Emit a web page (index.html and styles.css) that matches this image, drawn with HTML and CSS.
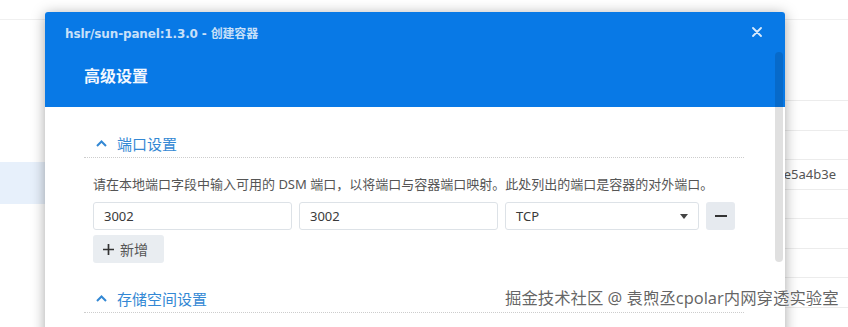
FILE: index.html
```html
<!DOCTYPE html>
<html lang="zh-CN">

<head>
    <meta charset="UTF-8" />
    <title>创建容器</title>
    <link rel="stylesheet" href="styles.css">
</head>

<body>

    <div class="topbar"></div>

    <div class="page">
        <aside class="sidebar">
            <div class="side-item active"></div>
        </aside>
        <main class="list">
            <div class="list-head"></div>
            <div class="row"></div>
            <div class="row"></div>
            <div class="row"><span class="cell-id">be5a4b3e</span></div>
            <div class="row"></div>
            <div class="row"></div>
            <div class="row"></div>
            <div class="row"></div>
        </main>
    </div>

    <div class="modal">
        <div class="modal-head">
            <div class="modal-title">
                <span>hslr/sun-panel:1.3.0 - <span class="title-cjk">创建容器</span></span>
                <button class="close" aria-label="关闭">
                    <svg width="10" height="10" viewBox="0 0 10 10">
                        <path d="M1 1 L9 9 M9 1 L1 9" stroke="currentColor" stroke-width="1.8" stroke-linecap="round" />
                    </svg>
                </button>
            </div>
            <h2 class="modal-subtitle">高级设置</h2>
        </div>

        <div class="modal-body">
            <section class="group">
                <div class="group-title">
                    <svg class="chevron" width="11" height="7" viewBox="0 0 11 7">
                        <path d="M1 6 L5.5 1.5 L10 6" fill="none" stroke="currentColor" stroke-width="2" />
                    </svg>
                    端口设置
                </div>
                <div class="group-body">
                    <p class="hint">请在本地端口字段中输入可用的 DSM 端口，以将端口与容器端口映射。此处列出的端口是容器的对外端口。</p>
                    <div class="port-row">
                        <input class="field" value="3002" />
                        <input class="field" value="3002" />
                        <div class="field select">
                            <span>TCP</span>
                            <svg width="8" height="5" viewBox="0 0 8 5">
                                <path d="M0 0 L8 0 L4 5 Z" fill="#444" />
                            </svg>
                        </div>
                        <button class="btn-remove" aria-label="删除">
                            <svg width="12" height="2" viewBox="0 0 12 2">
                                <rect width="12" height="2" fill="#333" />
                            </svg>
                        </button>
                    </div>
                    <button class="btn-add">
                        <svg width="11" height="11" viewBox="0 0 11 11">
                            <path d="M5.5 0 V11 M0 5.5 H11" stroke="#333" stroke-width="1.7" />
                        </svg>
                        新增
                    </button>
                </div>
            </section>

            <section class="group">
                <div class="group-title">
                    <svg class="chevron" width="11" height="7" viewBox="0 0 11 7">
                        <path d="M1 6 L5.5 1.5 L10 6" fill="none" stroke="currentColor" stroke-width="2" />
                    </svg>
                    存储空间设置
                </div>
            </section>
        </div>

        <div class="scroll-thumb"></div>
    </div>

    <div class="watermark">掘金技术社区 @ 袁煦丞cpolar内网穿透实验室</div>

</body>

</html>
```

FILE: styles.css
```css
* {
    box-sizing: border-box;
}

body {
    margin: 0;
    width: 848px;
    height: 327px;
    overflow: hidden;
    background: #fff;
    font-family: "Noto Sans", "Noto Sans CJK SC", sans-serif;
    color: #333;
    position: relative;
}

.topbar {
    height: 20px;
    border-bottom: 1px solid #f0f0f0;
}

.page {
    display: grid;
    grid-template-columns: 220px 1fr;
}

.sidebar {
    padding-top: 142px;
}

.side-item {
    height: 42px;
}

.side-item.active {
    background: #e7f0fb;
}

.list-head {
    height: 81px;
    border-bottom: 1px solid #ececec;
}

.row {
    display: grid;
    grid-template-columns: 616px 1fr;
    align-items: center;
    height: 29.5px;
    border-bottom: 1px solid #ececec;
}

.cell-id {
    text-align: right;
    font-size: 13px;
    color: #555;
}

.modal {
    position: absolute;
    left: 45px;
    top: 12px;
    width: 740px;
    height: 340px;
    background: #fff;
    border-radius: 3px 3px 0 0;
    box-shadow: 0 2px 14px rgba(0, 0, 0, 0.35);
    overflow: hidden;
}

.modal-head {
    background: #0879e6;
    padding: 0 23px 0 20px;
}

.modal-title {
    display: flex;
    align-items: center;
    justify-content: space-between;
    height: 40px;
    font-family: "DejaVu Sans", "Noto Sans CJK SC", sans-serif;
    font-size: 12px;
    font-weight: bold;
    letter-spacing: -0.15px;
    color: rgba(255, 255, 255, 0.78);
}

.title-cjk {
    font-family: "Noto Sans CJK SC", sans-serif;
    font-size: 12px;
}

.close {
    display: flex;
    padding: 0;
    border: none;
    background: none;
    color: rgba(255, 255, 255, 0.85);
}

.modal-subtitle {
    margin: 0;
    padding: 12px 0 19px 19px;
    font-size: 16px;
    line-height: 24px;
    font-weight: bold;
    color: #f2f7fe;
}

.modal-body {
    padding: 22px 41px 0 39px;
}

.group-title {
    display: flex;
    align-items: center;
    gap: 10px;
    height: 29px;
    padding-left: 12px;
    font-size: 15px;
    color: #3388d4;
    border-bottom: 1px dotted #cdcdcd;
}

.group + .group {
    margin-top: 21px;
}

.group-body {
    padding: 0 8px 0 9px;
}

.hint {
    margin: 16px 0 8px;
    font-size: 13px;
    line-height: 20px;
    color: #555;
}

.port-row {
    display: grid;
    grid-template-columns: 199px 199px 194px 29px;
    column-gap: 7px;
    height: 28px;
}

.field {
    height: 28px;
    padding: 0 10px;
    border: 1px solid #dde2e7;
    border-radius: 3px;
    font-family: inherit;
    font-size: 13px;
    color: #3a3a3a;
    background: #fff;
}

.select {
    display: flex;
    align-items: center;
    justify-content: space-between;
    padding-right: 10px;
}

.btn-remove {
    display: flex;
    align-items: center;
    justify-content: center;
    height: 28px;
    border: none;
    border-radius: 3px;
    background: #e6eaef;
    padding: 0;
}

.btn-add {
    display: flex;
    align-items: center;
    gap: 6px;
    margin-top: 5px;
    height: 28px;
    width: 71px;
    padding: 0 10px;
    border: none;
    border-radius: 3px;
    background: #e9edf1;
    font-family: inherit;
    font-size: 14px;
    color: #555;
}

.scroll-thumb {
    position: absolute;
    right: 2px;
    top: 40px;
    width: 8px;
    height: 210px;
    border-radius: 4px;
    background: rgba(0, 0, 0, 0.12);
}

.watermark {
    position: absolute;
    left: 505px;
    top: 286px;
    font-size: 16.4px;
    line-height: 24px;
    color: rgba(80, 80, 80, 0.88);
    text-shadow: 0 0 2px #fff, 0 0 1px #fff;
    white-space: nowrap;
}
```
